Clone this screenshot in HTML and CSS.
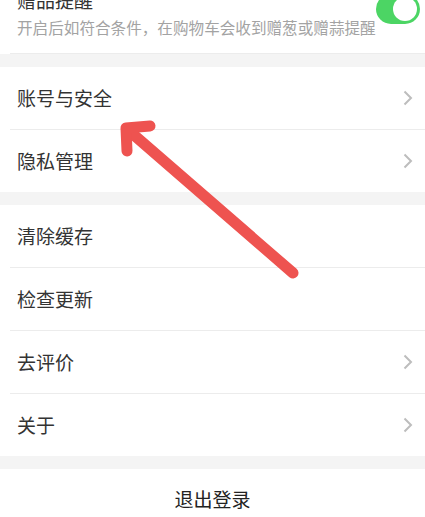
FILE: index.html
```html
<!DOCTYPE html>
<html lang="zh">
<head>
<meta charset="utf-8">
<link rel="stylesheet" href="styles.css">
</head>
<body>
<div class="page">
  <section class="group top">
    <div class="top-inner">
      <div class="top-text">
        <div class="title">赠品提醒</div>
        <div class="sub">开启后如符合条件，在购物车会收到赠葱或赠蒜提醒</div>
      </div>
      <div class="toggle"><span class="knob"></span></div>
    </div>
  </section>

  <section class="group">
    <div class="row"><span class="label">账号与安全</span><svg class="chev" viewBox="0 0 10 16"><polyline points="1.5,1.5 8,8 1.5,14.5"/></svg></div>
    <div class="row"><span class="label">隐私管理</span><svg class="chev" viewBox="0 0 10 16"><polyline points="1.5,1.5 8,8 1.5,14.5"/></svg></div>
  </section>

  <section class="group">
    <div class="row"><span class="label">清除缓存</span></div>
    <div class="row"><span class="label">检查更新</span></div>
    <div class="row"><span class="label">去评价</span><svg class="chev" viewBox="0 0 10 16"><polyline points="1.5,1.5 8,8 1.5,14.5"/></svg></div>
    <div class="row"><span class="label">关于</span><svg class="chev" viewBox="0 0 10 16"><polyline points="1.5,1.5 8,8 1.5,14.5"/></svg></div>
  </section>

  <section class="group logout">
    <span class="logout-text">退出登录</span>
  </section>

  <svg class="arrow" viewBox="0 0 425 517" width="425" height="517">
    <line x1="127" y1="129" x2="293" y2="273"/>
    <polyline points="150,126 126,128 127,151"/>
  </svg>
</div>
</body>
</html>
```

FILE: styles.css
```css
html, body {
  margin: 0;
  padding: 0;
  background: #f4f4f4;
  font-family: "Noto Sans CJK SC", "Noto Sans", sans-serif;
  overflow: hidden;
}

.page {
  position: relative;
  width: 425px;
  height: 517px;
  overflow: hidden;
}

.group {
  background: #ffffff;
  margin-bottom: 13px;
}

.top {
  margin-top: -13px;
  padding-left: 10px;
}

.top-inner {
  display: flex;
  align-items: flex-start;
  justify-content: space-between;
  padding: 0 9px 15px 7px;
  border-bottom: 1px solid #ececec;
  height: 51px;
  box-sizing: content-box;
}

.top-text {
  display: flex;
  flex-direction: column;
  gap: 3px;
}

.title {
  font-size: 19px;
  line-height: 26px;
  color: #333;
}

.sub {
  font-size: 15.6px;
  line-height: 22px;
  color: #a3a3a3;
  white-space: nowrap;
}

.toggle {
  margin-top: 7px;
  width: 44px;
  height: 30px;
  border-radius: 15px;
  background: #4cd564;
  display: flex;
  align-items: center;
  justify-content: flex-end;
  padding: 0 3px;
  box-sizing: border-box;
  flex-shrink: 0;
}

.knob {
  width: 24px;
  height: 24px;
  border-radius: 50%;
  background: #fff;
}

.row {
  height: 62px;
  display: flex;
  align-items: center;
  justify-content: space-between;
  padding: 0 12px 0 17px;
}

.row + .row {
  border-top: 1px solid #ececec;
  margin-left: 10px;
  padding-left: 7px;
}

.label {
  font-size: 19px;
  color: #333;
  line-height: 26px;
}

.chev {
  width: 10px;
  height: 16px;
  fill: none;
  stroke: #bdbdbd;
  stroke-width: 2;
}

.logout {
  height: 60px;
  display: flex;
  align-items: center;
  justify-content: center;
}

.logout-text {
  font-size: 19px;
  line-height: 26px;
  color: #222;
}

.arrow {
  position: absolute;
  left: 0;
  top: 0;
  pointer-events: none;
}

.arrow line,
.arrow polyline {
  fill: none;
  stroke: #ee5350;
  stroke-width: 11;
  stroke-linecap: round;
  stroke-linejoin: round;
}
```
